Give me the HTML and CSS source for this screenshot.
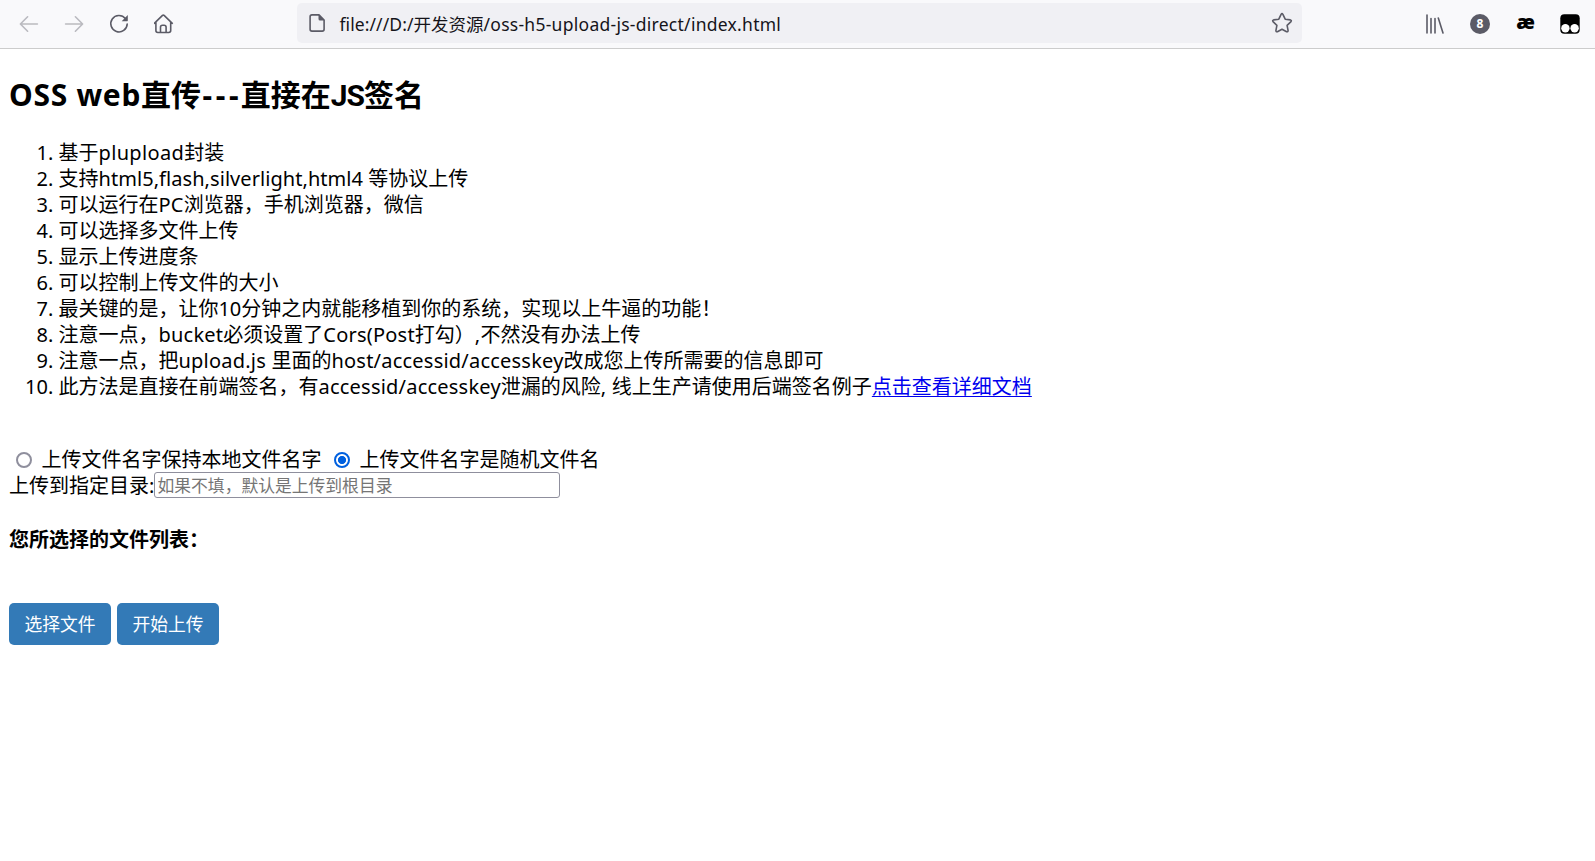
FILE: index.html
```html
<!DOCTYPE html>
<html lang="zh-CN">
<head>
<meta charset="utf-8">
<title>OSS web直传</title>
<link rel="stylesheet" href="styles.css">
</head>
<body>
<header class="toolbar">
  <nav class="nav">
    <svg class="dim" width="20" height="20" viewBox="0 0 20 20"><path d="M18.4 10H1.6M8.6 2.8L1.4 10l7.2 7.2"/></svg>
    <svg class="dim" width="20" height="20" viewBox="0 0 20 20"><path d="M1.6 10h16.8M11.4 2.8l7.2 7.2-7.2 7.2"/></svg>
    <svg width="20" height="20" viewBox="0 0 20 20"><path d="M16.4 4.6A8.2 8.2 0 1 0 18.2 10"/><path class="solid" d="M18.8 1v5.6a.6.6 0 0 1-.6.6h-5.5z"/></svg>
    <svg width="20" height="20" viewBox="0.7 0 20 20"><path d="M1 9.3L9.2 1.4q.8-.7 1.6 0L19 9.3M2.6 8v8.6q0 1.9 1.9 1.9h11q1.9 0 1.9-1.9V8M7.2 18.5v-5.3q0-2 2-2h1.600q2 0 2 2v5.300"/></svg>
  </nav>
  <div class="address">
    <svg width="18" height="20" viewBox="0 0 18 20"><path d="M4 1.900h7L16.100 7v9.200q0 1.900-1.900 1.900H4q-1.900 0-1.900-1.900V3.800Q2.100 1.900 4 1.900z"/><path class="solid" d="M10.500 1.500L16.500 7.500h-4.500q-1.500 0-1.500-1.500z"/></svg>
    <span class="url"><span class="u1">file:///D:/</span>开发资源<span class="u2">/oss-h5-upload-js-direct/index.html</span></span>
    <svg class="star" width="22" height="22" viewBox="0 0 22 22"><path d="M10.100 2.300q.9-1.500 1.800 0l2.300 4.900 5.200.7q1.500.4.6 1.700l-3.900 3.700 1 5.300q0 1.600-1.500 1.100L11 17.200l-4.600 2.500q-1.500.5-1.500-1.100l1-5.300L2 9.600q-.9-1.300.6-1.700l5.200-.7z"/></svg>
  </div>
  <div class="extensions">
    <svg width="20" height="20" viewBox="0 0 20 20"><path d="M2 1v18M6 4.500V19M10 4.500V19M13.300 4L18 19"/></svg>
    <span class="count">8</span>
    <span class="ae">æ</span>
    <svg width="20" height="20" viewBox="0 0 20 20"><rect class="black" x=".3" y=".2" width="19.400" height="19.600" rx="4"/><circle class="white" cx="5.400" cy="14.300" r="4.200"/><circle class="white" cx="14.600" cy="14.300" r="4.200"/></svg>
  </div>
</header>
<main>
  <h2><span class="h-a">OSS web</span>直传<span class="h-b">---</span>直接在<span class="h-c">JS</span>签名</h2>
  <ol>
    <li>基于<span class="en wide">plupload</span>封装</li>
    <li>支持<span class="en tight">html5,flash,silverlight,html4 </span>等协议上传</li>
    <li>可以运行在<span class="en">PC</span>浏览器，手机浏览器，微信</li>
    <li>可以选择多文件上传</li>
    <li>显示上传进度条</li>
    <li>可以控制上传文件的大小</li>
    <li>最关键的是，让你<span class="num">10</span>分钟之内就能移植到你的系统，实现以上牛逼的功能！</li>
    <li>注意一点，<span class="en">bucket</span>必须设置了<span class="en">Cors(Post</span>打勾）<span class="en">,</span>不然没有办法上传</li>
    <li>注意一点，把<span class="en">upload.js </span>里面的<span class="en">host/accessid/accesskey</span>改成您上传所需要的信息即可</li>
    <li>此方法是直接在前端签名，有<span class="en">accessid/accesskey</span>泄漏的风险<span class="en">, </span>线上生产请使用后端签名例子<a href="#">点击查看详细文档</a></li>
  </ol>
  <form>
    <div class="row"><input type="radio" name="t"><label>上传文件名字保持本地文件名字</label><input type="radio" name="t" checked><label>上传文件名字是随机文件名</label></div>
    <div class="row"><span class="dir">上传到指定目录:</span><input class="path" type="text" placeholder="如果不填，默认是上传到根目录"></div>
  </form>
  <h4>您所选择的文件列表：</h4>
  <div class="buttons"><a class="btn">选择文件</a><a class="btn">开始上传</a></div>
</main>
</body>
</html>
```
FILE: styles.css
```css
* { box-sizing: border-box; }
body {
  margin: 0;
  background: #fff;
  color: #000;
  font: 20px/26px "Noto Sans", "Noto Sans CJK SC", sans-serif;
}
.toolbar {
  display: flex;
  align-items: center;
  height: 49px;
  padding-bottom: 1px;
  background: #f9f9fb;
  border-bottom: 1px solid #ccc;
}
.toolbar svg { fill: none; stroke: #5b5b66; stroke-width: 1.6; stroke-linecap: round; stroke-linejoin: round; flex: none; }
.toolbar .dim { stroke: #bababf; }
.toolbar .solid { fill: #5b5b66; stroke: none; }
.toolbar .black { fill: #000; stroke: none; }
.toolbar .white { fill: #fff; stroke: none; }
.nav { display: flex; gap: 25px; width: 297px; padding-left: 19px; }
.address {
  display: flex;
  align-items: center;
  width: 1005px;
  height: 40px;
  margin-top: -1px;
  padding: 0 9px 0 11px;
  background: #f0f0f4;
  border-radius: 5px;
}
.url { margin-left: 13.5px; padding-top: 1px; flex: 1; font-size: 17.5px; color: #15141a; white-space: nowrap; }
.u1 { letter-spacing: 0.08px; }
.u2 { letter-spacing: 0.27px; }
.extensions { display: flex; align-items: center; margin-left: 123px; gap: 25px; }
.count {
  width: 20px; height: 20px;
  border-radius: 50%;
  background: #5b5b66; color: #fff;
  font: bold 12px/20px "Open Sans", sans-serif;
  text-align: center;
}
.ae { width: 20px; font: 800 20px/20px "Open Sans", sans-serif; display: flex; justify-content: center; margin: -4px 0 0; letter-spacing: -1px; }
main { padding: 26px 9px 0; white-space: nowrap; }
h2 { height: 40px; margin: 0 0 25px; font-size: 30px; line-height: 40px; }
.h-a { letter-spacing: 0.7px; }
.h-b { letter-spacing: 3.6px; margin: 0 -1.5px 0 1.5px; }
.h-c { font-family: Roboto, sans-serif; letter-spacing: -1px; }
ol { margin: 0 0 46px; padding: 0 0 0 49.5px; }
li { height: 26px; }
.en { letter-spacing: 0.22px; white-space: pre; }
.en.wide { letter-spacing: 0.35px; }
.en.tight { letter-spacing: 0.06px; }
.num { letter-spacing: -0.1px; }
a[href] { color: #0000ee; text-underline-offset: 2px; text-decoration-thickness: 1px; }
.row { display: flex; align-items: center; height: 26px; }
.row label, .dir { padding-top: 1px; }
.row input[type="radio"] {
  appearance: none;
  width: 16px; height: 16px;
  margin: 2px 9.5px 0 7px;
  border: 2px solid #8f8f9d;
  border-radius: 50%;
  background: #fff;
}
.row input[type="radio"]:checked {
  margin-left: 12.5px;
  border-color: #0060df;
  background: radial-gradient(circle, #0060df 3.7px, #fff 4.4px);
}
.dir { width: 145px; }
.path {
  width: 406px; height: 26px;
  padding: 0 2px 0 2.5px;
  border: 1px solid #8f8f9d;
  border-radius: 3px;
  font: 16.8px "Noto Sans CJK SC", sans-serif;
}
.path::placeholder { color: #757575; }
h4 { margin: 29px 0 50px; font-size: 20px; line-height: 26px; }
.buttons { display: flex; gap: 6px; }
.btn {
  width: 102px; height: 42px;
  border-radius: 5px;
  background: #337ab7;
  color: #fff;
  font-size: 17.8px;
  line-height: 42px;
  text-align: center;
}
```
